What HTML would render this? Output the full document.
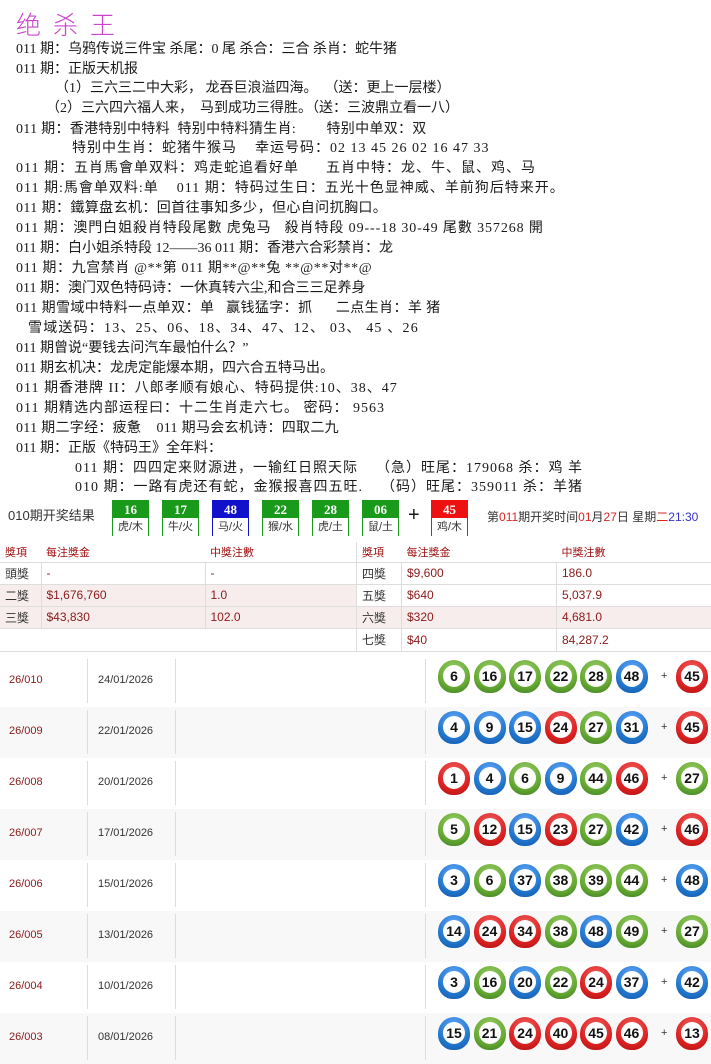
<!DOCTYPE html>
<html><head><meta charset="utf-8">
<style>
*{margin:0;padding:0;box-sizing:border-box}
body{width:711px;height:1056px;background:#fff;position:relative;overflow:hidden;font-family:"Liberation Serif","Noto Sans CJK SC",serif;color:#1a1a1a}
.l{position:absolute;font-size:14px;line-height:18px;white-space:pre}
.t{position:absolute;left:16px;top:6px;font-size:25px;color:#cc44cc;font-family:"Noto Sans CJK SC",sans-serif;letter-spacing:12px;font-weight:300}
.s{font-family:"Liberation Sans","Noto Sans CJK SC",sans-serif}
.bx{position:absolute;top:500px;width:37px;height:36px;border:1px solid #1a9a1a;border-bottom:none;text-align:center;font-family:"Liberation Sans","Noto Sans CJK SC",sans-serif}
.bx b{display:block;height:17px;background:#1a9a1a;color:#fff;font-size:13px;line-height:17px;font-family:"Liberation Serif",serif}
.bx i{display:block;font-style:normal;font-size:11px;line-height:18px;color:#333}
table{position:absolute;border-collapse:collapse;font-family:"Liberation Sans","Noto Sans CJK SC",sans-serif;font-size:12px}
td{height:22px;border-bottom:1px solid #ddd;padding-left:5px;color:#333}
td.v{color:#8b1a1a;border-left:1px solid #ddd}
tr.h td{color:#a01010;font-size:11px;height:20px;border-left:none}
tr.p td{background:#f7eded}
.row{position:absolute;left:0;width:711px;height:51px;font-family:"Liberation Sans",sans-serif;font-size:11px}
.row .n{position:absolute;left:9px;top:18px;color:#8b1a1a}
.row .d{position:absolute;left:98px;top:18px;color:#333}
.row .sep{position:absolute;top:3px;height:44px;border-left:1px solid #ddd}
.ball{position:absolute;top:4px;width:32px;height:33px;border-radius:50% 50% 46% 46%;}
.ball span{position:absolute;left:5px;top:5px;width:22px;height:22px;border-radius:50%;background:radial-gradient(circle at 50% 40%,#fff 60%,#e6e6e6);text-align:center;line-height:22px;font-weight:bold;font-size:14px;color:#111}
.r{background:radial-gradient(circle at 50% 30%,#f06060,#d22 60%,#a11)}
.g{background:radial-gradient(circle at 50% 30%,#9c6,#6a3 60%,#3a7a20)}
.b{background:radial-gradient(circle at 50% 30%,#6af,#27c 60%,#15a)}
.plus{position:absolute;left:661px;top:14px;font-size:11px;color:#333}
</style></head><body>
<div class="t">绝杀王</div>
<div class="l" style="left:16px;top:41px">011 期：乌鸦传说三件宝 杀尾：0 尾 杀合：三合 杀肖：蛇牛猪</div>
<div class="l" style="left:16px;top:61px">011 期：正版天机报</div>
<div class="l" style="left:55px;top:80px">（1）三六三二中大彩， 龙吞巨浪溢四海。  （送：更上一层楼）</div>
<div class="l" style="left:46px;top:100px">（2）三六四六福人来，  马到成功三得胜。（送：三波鼎立看一八）</div>
<div class="l" style="left:16px;top:121px;letter-spacing:0.3px">011 期：香港特别中特料  特别中特料猜生肖:        特别中单双：双</div>
<div class="l" style="left:72px;top:140px;letter-spacing:1px">特别中生肖：蛇猪牛猴马    幸运号码：02 13 45 26 02 16 47 33</div>
<div class="l" style="left:16px;top:160px;letter-spacing:1px">011 期：五肖馬會单双料：鸡走蛇追看好单      五肖中特：龙、牛、鼠、鸡、马</div>
<div class="l" style="left:16px;top:180px;letter-spacing:1px">011 期:馬會单双料:单    011 期：特码过生日：五光十色显神威、羊前狗后特来开。</div>
<div class="l" style="left:16px;top:200px;letter-spacing:0.4px">011 期：鐵算盘玄机：回首往事知多少，但心自问扤胸口。</div>
<div class="l" style="left:16px;top:220px;letter-spacing:0.9px">011 期：澳門白姐殺肖特段尾數 虎兔马   殺肖特段 09---18 30-49 尾數 357268 開</div>
<div class="l" style="left:16px;top:240px">011 期：白小姐杀特段 12——36 011 期：香港六合彩禁肖：龙</div>
<div class="l" style="left:16px;top:260px;letter-spacing:0.6px">011 期：九宫禁肖 @**第 011 期**@**兔 **@**对**@</div>
<div class="l" style="left:16px;top:280px">011 期：澳门双色特码诗：一休真转六尘,和合三三足养身</div>
<div class="l" style="left:16px;top:300px;letter-spacing:0.4px">011 期雪域中特料一点单双：单   赢钱猛字：抓      二点生肖：羊 猪</div>
<div class="l" style="left:28px;top:320px;letter-spacing:1.2px">雪域送码：13、25、06、18、34、47、12、 03、 45 、26</div>
<div class="l" style="left:16px;top:340px">011 期曾说“要钱去问汽车最怕什么？”</div>
<div class="l" style="left:16px;top:360px">011 期玄机决：龙虎定能爆本期，四六合五特马出。</div>
<div class="l" style="left:16px;top:380px;letter-spacing:1px">011 期香港牌 II：八郎孝顺有娘心、特码提供:10、38、47</div>
<div class="l" style="left:16px;top:400px;letter-spacing:1px">011 期精选内部运程曰：十二生肖走六七。 密码： 9563</div>
<div class="l" style="left:16px;top:420px;letter-spacing:0.3px">011 期二字经：疲惫    011 期马会玄机诗：四取二九</div>
<div class="l" style="left:16px;top:440px">011 期：正版《特码王》全年料：</div>
<div class="l" style="left:75px;top:460px;letter-spacing:1px">011 期：四四定来财源进，一输红日照天际    （急）旺尾：179068 杀：鸡 羊</div>
<div class="l" style="left:75px;top:479px;letter-spacing:1px">010 期：一路有虎还有蛇，金猴报喜四五旺.    （码）旺尾：359011 杀：羊猪</div>

<div class="l s" style="left:8px;top:507px;font-size:13px;color:#333">010期开奖结果</div>
<div class="bx" style="left:112px"><b>16</b><i>虎/木</i></div>
<div class="bx" style="left:162px"><b>17</b><i>牛/火</i></div>
<div class="bx" style="left:212px;border-color:#11c"><b style="background:#11c">48</b><i>马/火</i></div>
<div class="bx" style="left:262px"><b>22</b><i>猴/水</i></div>
<div class="bx" style="left:312px"><b>28</b><i>虎/土</i></div>
<div class="bx" style="left:362px"><b>06</b><i>鼠/土</i></div>
<div class="l s" style="left:408px;top:506px;font-size:20px">+</div>
<div class="bx" style="left:431px;border-color:#e11"><b style="background:#e11">45</b><i>鸡/木</i></div>
<div class="l s" style="left:487px;top:508px;font-size:12px;color:#333">第<span style="color:#d22">011</span>期开奖时间<span style="color:#d22">01</span>月<span style="color:#d22">27</span>日 星期<span style="color:#d22">二</span><span style="color:#33c">21:30</span></div>

<table style="left:0;top:542px;width:356px">
<tr class="h"><td style="width:41px">獎項</td><td style="width:164px;border-left:none">每注獎金</td><td style="border-left:none">中獎注數</td></tr>
<tr><td>頭獎</td><td class="v">-</td><td class="v">-</td></tr>
<tr class="p"><td>二獎</td><td class="v">$1,676,760</td><td class="v">1.0</td></tr>
<tr class="p"><td>三獎</td><td class="v">$43,830</td><td class="v">102.0</td></tr>
<tr><td style="height:23px"></td><td></td><td></td></tr>
</table>
<table style="left:356px;top:542px;width:355px;border-left:1px solid #ddd">
<tr class="h"><td style="width:45px">獎項</td><td style="width:155px;border-left:none">每注獎金</td><td style="border-left:none">中獎注數</td></tr>
<tr><td>四獎</td><td class="v">$9,600</td><td class="v">186.0</td></tr>
<tr><td>五獎</td><td class="v">$640</td><td class="v">5,037.9</td></tr>
<tr class="p"><td>六獎</td><td class="v">$320</td><td class="v">4,681.0</td></tr>
<tr><td style="height:23px">七獎</td><td class="v">$40</td><td class="v">84,287.2</td></tr>
</table>

<div id="rows"></div>
<script>
var red=[1,2,7,8,12,13,18,19,23,24,29,30,34,35,40,45,46],blue=[3,4,9,10,14,15,20,25,26,31,36,37,41,42,47,48];
function c(n){return red.indexOf(n)>=0?'r':blue.indexOf(n)>=0?'b':'g'}
var data=[["26/010","24/01/2026",[6,16,17,22,28,48,45]],["26/009","22/01/2026",[4,9,15,24,27,31,45]],["26/008","20/01/2026",[1,4,6,9,44,46,27]],["26/007","17/01/2026",[5,12,15,23,27,42,46]],["26/006","15/01/2026",[3,6,37,38,39,44,48]],["26/005","13/01/2026",[14,24,34,38,48,49,27]],["26/004","10/01/2026",[3,16,20,22,24,37,42]],["26/003","08/01/2026",[15,21,24,40,45,46,13]]];
var h='';
data.forEach(function(r,i){
 h+='<div class="row" style="top:'+(656+i*51)+'px;background:'+(i%2?'#f8f8f8':'#fff')+'"><span class="n">'+r[0]+'</span><span class="d">'+r[1]+'</span><div class="sep" style="left:87px"></div><div class="sep" style="left:175px"></div><div class="sep" style="left:425px"></div>';
 r[2].forEach(function(n,j){var x=j<6?438+j*35.5:676;h+='<div class="ball '+c(n)+'" style="left:'+x+'px"><span>'+n+'</span></div>';});
 h+='<span class="plus">+</span></div>';
});
document.getElementById('rows').innerHTML=h;
</script>
</body></html>
